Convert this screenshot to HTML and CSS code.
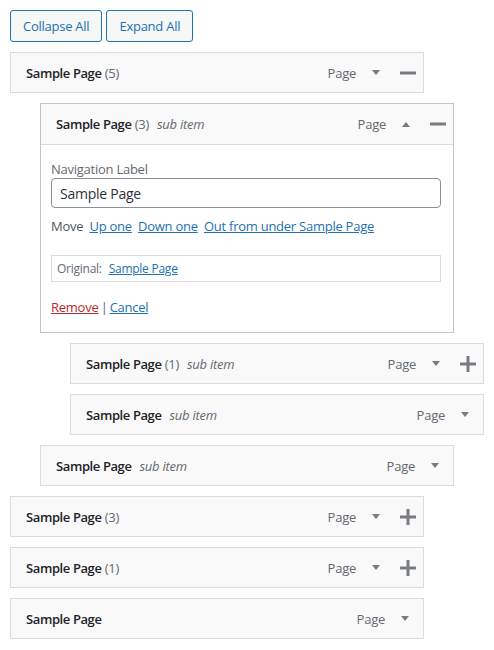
FILE: index.html
```html
<!DOCTYPE html>
<html>
<head>
<meta charset="utf-8">
<link rel="stylesheet" href="styles.css">
</head>
<body>
<div class="toolbar">
  <button class="btn">Collapse All</button>
  <button class="btn">Expand All</button>
</div>
<ul class="menu">
  <li class="item depth-0">
    <div class="bar">
      <span class="title"><b>Sample Page</b> <span class="count">(5)</span></span>
      <span class="controls">
        <span class="type">Page</span>
        <svg class="arrow" width="8" height="5" viewBox="0 0 8 5"><path d="M0 0H8L4 5Z"/></svg>
        <svg class="tog" width="16" height="16" viewBox="0 0 16 16"><rect x="0" y="6.5" width="16" height="3"/></svg>
      </span>
    </div>
  </li>
  <li class="item depth-1 open">
    <div class="bar">
      <span class="title"><b>Sample Page</b> <span class="count">(3)</span><i class="sub">sub item</i></span>
      <span class="controls">
        <span class="type">Page</span>
        <svg class="arrow" width="8" height="5" viewBox="0 0 8 5"><path d="M0 5H8L4 0Z"/></svg>
        <svg class="tog" width="16" height="16" viewBox="0 0 16 16"><rect x="0" y="6.5" width="16" height="3"/></svg>
      </span>
    </div>
    <div class="settings">
      <label class="lbl">Navigation Label</label>
      <input class="field" type="text" value="Sample Page">
      <div class="move">Move <a href="#">Up one</a> <a href="#">Down one</a> <a href="#">Out from under Sample Page</a></div>
      <div class="original">Original: <a href="#">Sample Page</a></div>
      <div class="actions"><a class="remove" href="#">Remove</a> <span class="sep">|</span> <a href="#">Cancel</a></div>
    </div>
  </li>
  <li class="item depth-2">
    <div class="bar">
      <span class="title"><b>Sample Page</b> <span class="count">(1)</span><i class="sub">sub item</i></span>
      <span class="controls">
        <span class="type">Page</span>
        <svg class="arrow" width="8" height="5" viewBox="0 0 8 5"><path d="M0 0H8L4 5Z"/></svg>
        <svg class="tog" width="16" height="16" viewBox="0 0 16 16"><rect x="0" y="6.5" width="16" height="3"/><rect x="6.5" y="0" width="3" height="16"/></svg>
      </span>
    </div>
  </li>
  <li class="item depth-2">
    <div class="bar">
      <span class="title"><b>Sample Page</b><i class="sub">sub item</i></span>
      <span class="controls noicon">
        <span class="type">Page</span>
        <svg class="arrow" width="8" height="5" viewBox="0 0 8 5"><path d="M0 0H8L4 5Z"/></svg>
      </span>
    </div>
  </li>
  <li class="item depth-1">
    <div class="bar">
      <span class="title"><b>Sample Page</b><i class="sub">sub item</i></span>
      <span class="controls noicon">
        <span class="type">Page</span>
        <svg class="arrow" width="8" height="5" viewBox="0 0 8 5"><path d="M0 0H8L4 5Z"/></svg>
      </span>
    </div>
  </li>
  <li class="item depth-0">
    <div class="bar">
      <span class="title"><b>Sample Page</b> <span class="count">(3)</span></span>
      <span class="controls">
        <span class="type">Page</span>
        <svg class="arrow" width="8" height="5" viewBox="0 0 8 5"><path d="M0 0H8L4 5Z"/></svg>
        <svg class="tog" width="16" height="16" viewBox="0 0 16 16"><rect x="0" y="6.5" width="16" height="3"/><rect x="6.5" y="0" width="3" height="16"/></svg>
      </span>
    </div>
  </li>
  <li class="item depth-0">
    <div class="bar">
      <span class="title"><b>Sample Page</b> <span class="count">(1)</span></span>
      <span class="controls">
        <span class="type">Page</span>
        <svg class="arrow" width="8" height="5" viewBox="0 0 8 5"><path d="M0 0H8L4 5Z"/></svg>
        <svg class="tog" width="16" height="16" viewBox="0 0 16 16"><rect x="0" y="6.5" width="16" height="3"/><rect x="6.5" y="0" width="3" height="16"/></svg>
      </span>
    </div>
  </li>
  <li class="item depth-0">
    <div class="bar">
      <span class="title"><b>Sample Page</b></span>
      <span class="controls noicon">
        <span class="type">Page</span>
        <svg class="arrow" width="8" height="5" viewBox="0 0 8 5"><path d="M0 0H8L4 5Z"/></svg>
      </span>
    </div>
  </li>
</ul>
</body>
</html>
```

FILE: styles.css
```css
* { box-sizing: border-box; }
html, body { margin: 0; background: #fff; }
body {
  padding: 10px;
  font-family: "Open Sans", "Noto Sans", sans-serif;
  font-size: 13px;
  letter-spacing: -0.25px;
  color: #3c434a;
}
.toolbar { display: flex; gap: 4px; margin-bottom: 10px; }
.btn {
  height: 32px;
  padding: 0 12px;
  border: 1px solid #2271b1;
  border-radius: 3px;
  background: #f6f7f7;
  color: #2271b1;
  font-family: inherit;
  font-size: 13px;
  letter-spacing: -0.25px;
  line-height: 30px;
}
.menu { list-style: none; margin: 0; padding: 0; }
.item { width: 414px; margin-bottom: 10px; }
.depth-1 { margin-left: 30px; }
.depth-2 { margin-left: 60px; }
.bar {
  display: flex;
  align-items: center;
  height: 41px;
  padding-left: 15px;
  border: 1px solid #dcdcde;
  background: #f9f9f9;
}
.title { color: #646970; white-space: nowrap; }
.title b { font-weight: 600; color: #1d2327; letter-spacing: -0.4px; }
.sub { margin-left: 8px; font-style: italic; color: #646970; }
.controls { margin-left: auto; display: flex; align-items: center; padding-right: 7px; }
.controls.noicon { padding-right: 14px; }
.type { color: #646970; margin-right: 16px; }
.arrow { fill: #787c82; display: block; }
.tog { fill: #787c82; display: block; margin-left: 20px; }
.open { border: 1px solid #c3c4c7; }
.open .bar { border: none; border-bottom: 1px solid #dcdcde; height: 41px; padding-left: 15px; }
.settings { padding: 15px 12px 15px 10px; background: #fff; }
.lbl { display: block; line-height: 18px; color: #646970; }
.field {
  display: block;
  width: 390px;
  height: 30px;
  margin: 0;
  padding: 0 8px;
  border: 1px solid #8c8f94;
  border-radius: 4px;
  font-family: inherit;
  font-size: 14px;
  letter-spacing: -0.25px;
  color: #2c3338;
}
.move { margin-top: 8px; line-height: 20px; color: #50575e; }
.move a { margin-left: 3px; }
a { color: #2271b1; }
.original {
  margin-top: 19px;
  width: 390px;
  height: 27px;
  padding: 0 5px;
  border: 1px solid #dcdcde;
  line-height: 25px;
  font-size: 12px;
  color: #646970;
}
.original a { margin-left: 4px; }
.actions { margin-top: 15px; line-height: 20px; color: #646970; }
.sep { margin: 0 -1px; }
.remove { color: #b32d2e; }
```
